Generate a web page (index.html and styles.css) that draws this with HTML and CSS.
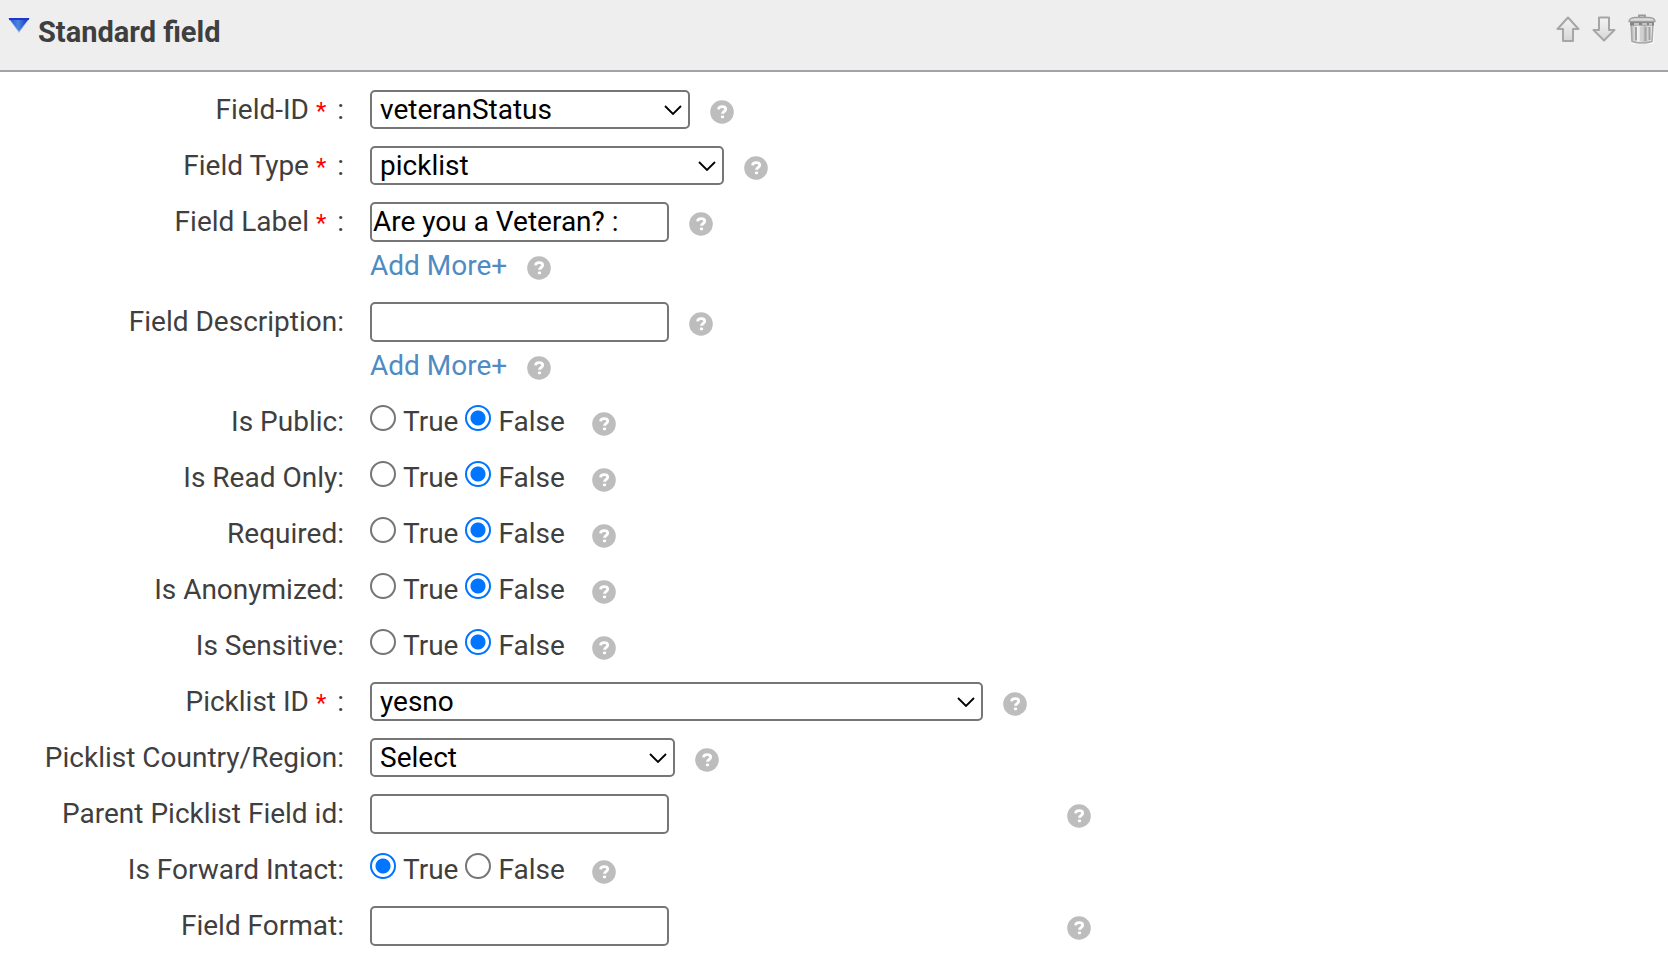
FILE: index.html
```html
<!DOCTYPE html>
<html lang="en">
<head>
<meta charset="utf-8">
<title>Standard field</title>
<link rel="stylesheet" href="styles.css">
</head>
<body>
<svg class="defs" width="0" height="0" aria-hidden="true">
  <defs>
    <linearGradient id="tri" x1="0" y1="0" x2="1" y2="0"><stop offset="0" stop-color="#2a50d8"/><stop offset="0.45" stop-color="#4a86dc"/><stop offset="1" stop-color="#1230c4"/></linearGradient>
    <linearGradient id="arrow" x1="0" y1="0" x2="0" y2="1"><stop offset="0" stop-color="#f4f4f4"/><stop offset="1" stop-color="#d6d6d6"/></linearGradient>
    <linearGradient id="can" x1="0" y1="0" x2="1" y2="0"><stop offset="0" stop-color="#b4b4b4"/><stop offset="0.3" stop-color="#f6f6f6"/><stop offset="0.6" stop-color="#c4c4c4"/><stop offset="1" stop-color="#ececec"/></linearGradient>
    <symbol id="help" viewBox="0 0 24 24"><circle cx="12" cy="12" r="11.800" fill="#bdbdbd"/><path d="M8.500 9.300C8.700 7.600 10 6.700 12.200 6.700c2.100 0 3.500 1 3.500 2.600 0 2.200-3.200 2.200-3.200 4.500" fill="none" stroke="#fff" stroke-width="2.800"/><rect x="10.900" y="15.600" width="3.200" height="2.600" rx="1" fill="#fff"/></symbol>
    <symbol id="chevron" viewBox="0 0 18 10"><path d="M1 1l8 8 8-8" fill="none" stroke="#000" stroke-width="1.800"/></symbol>
  </defs>
</svg>
<header class="bar">
  <button class="toggle" type="button" aria-label="Collapse section"><svg width="22" height="15" viewBox="0 0 22 15"><path d="M0 0h22L11 15z" fill="#a9bdf0"/><path d="M1.500 1h19L11 13.500z" fill="url(#tri)"/><path d="M1 1h20" stroke="#1d35cc" stroke-width="2"/></svg></button>
  <h1 class="title">Standard field</h1>
  <div class="tools">
    <button type="button" aria-label="Move up"><svg width="24" height="26" viewBox="0 0 24 26"><path d="M12 1.500L22.500 13H17v12H7V13H1.500z" fill="url(#arrow)" stroke="#a6a6a6" stroke-width="2" stroke-linejoin="round"/></svg></button>
    <button type="button" aria-label="Move down"><svg width="24" height="26" viewBox="0 0 24 26"><path d="M12 24.500L22.500 14H17V1.500H7V14H1.500z" fill="url(#arrow)" stroke="#a6a6a6" stroke-width="2" stroke-linejoin="round"/></svg></button>
    <button type="button" aria-label="Delete"><svg width="28" height="32" viewBox="0 0 28 32"><path d="M1.500 8h25l-1 23h-22z" fill="#fafafa"/><path d="M3 11h22l-1 17.500Q14 31.500 4 28.500z" fill="url(#can)" stroke="#a8a8a8" stroke-width="1.500"/><path d="M8 14v13.500M17.500 14v14M21.500 14v13" stroke="#a2a2a2" stroke-width="2"/><path d="M13 14v14" stroke="#d0d0d0" stroke-width="2"/><path d="M2 9h24v3.500H2z" fill="#858585"/><path d="M6 11h5M14 11h5M21 11h3" stroke="#c4c4c4" stroke-width="1.800"/><path d="M1 8.500Q1 4.500 8 4.500h12q7 0 7 4z" fill="#dedede" stroke="#a0a0a0" stroke-width="1.300"/><path d="M11 4V2.500h6V4" fill="none" stroke="#999" stroke-width="1.800"/></svg></button>
  </div>
</header>
<form class="form">
  <div class="row"><label class="label" for="fid">Field-ID <span class="req">*</span> :</label>
    <div class="line"><span class="pick w-id"><select id="fid"><option>veteranStatus</option></select><svg class="chev"><use href="#chevron"/></svg></span><svg class="help"><use href="#help"/></svg></div></div>
  <div class="row"><label class="label" for="ftype">Field Type <span class="req">*</span> :</label>
    <div class="line"><span class="pick w-type"><select id="ftype"><option>picklist</option></select><svg class="chev"><use href="#chevron"/></svg></span><svg class="help"><use href="#help"/></svg></div></div>
  <div class="row"><label class="label" for="flabel">Field Label <span class="req">*</span> :</label>
    <div><div class="line"><input class="text" id="flabel" type="text" value="Are you a Veteran? :"><svg class="help"><use href="#help"/></svg></div>
    <div class="line more"><a href="#">Add More+</a><svg class="help"><use href="#help"/></svg></div></div></div>
  <div class="row"><label class="label" for="fdesc">Field Description:</label>
    <div><div class="line"><input class="text" id="fdesc" type="text"><svg class="help"><use href="#help"/></svg></div>
    <div class="line more"><a href="#">Add More+</a><svg class="help"><use href="#help"/></svg></div></div></div>
  <div class="row" role="radiogroup" aria-labelledby="l1"><span class="label" id="l1">Is Public:</span>
    <div class="line radios"><label><input type="radio" name="public">True</label><label><input type="radio" name="public" checked>False</label><svg class="help"><use href="#help"/></svg></div></div>
  <div class="row" role="radiogroup" aria-labelledby="l2"><span class="label" id="l2">Is Read Only:</span>
    <div class="line radios"><label><input type="radio" name="readonly">True</label><label><input type="radio" name="readonly" checked>False</label><svg class="help"><use href="#help"/></svg></div></div>
  <div class="row" role="radiogroup" aria-labelledby="l3"><span class="label" id="l3">Required:</span>
    <div class="line radios"><label><input type="radio" name="required">True</label><label><input type="radio" name="required" checked>False</label><svg class="help"><use href="#help"/></svg></div></div>
  <div class="row" role="radiogroup" aria-labelledby="l4"><span class="label" id="l4">Is Anonymized:</span>
    <div class="line radios"><label><input type="radio" name="anon">True</label><label><input type="radio" name="anon" checked>False</label><svg class="help"><use href="#help"/></svg></div></div>
  <div class="row" role="radiogroup" aria-labelledby="l5"><span class="label" id="l5">Is Sensitive:</span>
    <div class="line radios"><label><input type="radio" name="sensitive">True</label><label><input type="radio" name="sensitive" checked>False</label><svg class="help"><use href="#help"/></svg></div></div>
  <div class="row"><label class="label" for="pid">Picklist ID <span class="req">*</span> :</label>
    <div class="line"><span class="pick w-pick"><select id="pid"><option>yesno</option></select><svg class="chev"><use href="#chevron"/></svg></span><svg class="help"><use href="#help"/></svg></div></div>
  <div class="row"><label class="label" for="pcountry">Picklist Country/Region:</label>
    <div class="line"><span class="pick w-country"><select id="pcountry"><option>Select</option></select><svg class="chev"><use href="#chevron"/></svg></span><svg class="help"><use href="#help"/></svg></div></div>
  <div class="row"><label class="label" for="parent">Parent Picklist Field id:</label>
    <div class="line wide"><input class="text" id="parent" type="text"><svg class="help"><use href="#help"/></svg></div></div>
  <div class="row" role="radiogroup" aria-labelledby="l6"><span class="label" id="l6">Is Forward Intact:</span>
    <div class="line radios"><label><input type="radio" name="forward" checked>True</label><label><input type="radio" name="forward">False</label><svg class="help"><use href="#help"/></svg></div></div>
  <div class="row"><label class="label" for="format">Field Format:</label>
    <div class="line wide"><input class="text" id="format" type="text"><svg class="help"><use href="#help"/></svg></div></div>
</form>
</body>
</html>
```
FILE: styles.css
```css
* { box-sizing: border-box; }
body {
  margin: 0;
  background: #fff;
  color: #3f3f3f;
  font-family: Roboto, "Liberation Sans", sans-serif;
  font-size: 28px;
  line-height: 40px;
}
.defs { display: block; }
button {
  display: block;
  padding: 0;
  border: 0;
  background: none;
  cursor: pointer;
}
button svg { display: block; }

.bar {
  display: flex;
  align-items: flex-start;
  min-height: 72px;
  padding: 12px 12px 18px 8px;
  border-bottom: 2px solid #a3a2a8;
  background: #eee;
}
.toggle { padding-top: 6px; }
.title {
  margin: 0 0 0 8px;
  font-size: 29px;
  font-weight: 700;
}
.tools {
  display: flex;
  align-items: center;
  gap: 12px;
  height: 34px;
  margin-left: auto;
}

.form {
  display: grid;
  gap: 16px;
  padding: 18px 0 8px;
}
.row {
  display: grid;
  grid-template-columns: 344px 1fr;
  column-gap: 26px;
}
.label { text-align: right; }
.req {
  margin-right: 4px;
  color: #f00;
  font-size: 24px;
  line-height: 1;
}
.line {
  display: flex;
  align-items: center;
  gap: 20px;
  height: 40px;
}
.more { height: 44px; padding-top: 4px; }
.more a { color: #4f8bc2; text-decoration: none; }
.help {
  flex: none;
  width: 24px;
  height: 24px;
  margin-top: 4px;
}

select, .text {
  border: 2px solid #767676;
  border-radius: 5px;
  background: #fff;
  color: #000;
  font: inherit;
}
.pick {
  display: grid;
  align-items: center;
  height: 40px;
  padding-bottom: 1px;
}
.pick > * { grid-area: 1 / 1; }
select {
  appearance: none;
  width: 100%;
  height: 39px;
  padding: 0 32px 0 8px;
  line-height: 35px;
}
.chev {
  justify-self: end;
  width: 18px;
  height: 10px;
  margin-right: 8px;
  pointer-events: none;
}
.w-id { width: 320px; }
.w-type { width: 354px; }
.w-pick { width: 613px; }
.w-country { width: 305px; }
.text {
  width: 299px;
  height: 40px;
  padding: 0 1px;
}
.wide {
  justify-content: space-between;
  max-width: 721px;
}

.radios { gap: 7px; }
.radios label {
  display: flex;
  align-items: center;
  gap: 7px;
}
.radios .help { margin-left: 20px; }
.radios input {
  appearance: none;
  width: 26px;
  height: 26px;
  margin: 0 0 8px;
  border: 2px solid #767676;
  border-radius: 50%;
}
.radios input:checked {
  border-color: #0075ff;
  background: radial-gradient(circle, #0075ff 7px, #fff 8px);
}
```
